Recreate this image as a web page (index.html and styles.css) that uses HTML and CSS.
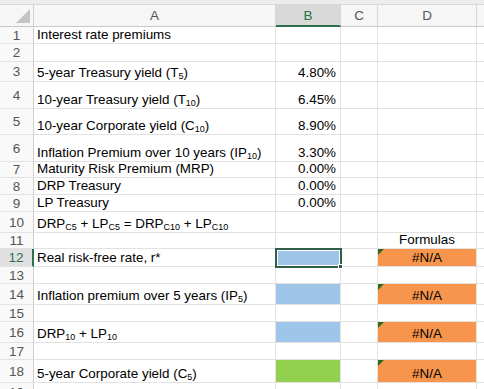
FILE: index.html
```html
<!DOCTYPE html>
<html>
<head>
<meta charset="utf-8">
<link rel="stylesheet" href="styles.css">
</head>
<body>
<div class="topstrip"></div>
<div class="sheet">
  <div class="corner"><span class="tri"></span></div>
  <div class="ch">A</div>
  <div class="ch sel">B</div>
  <div class="ch">C</div>
  <div class="ch">D</div>
  <div class="ch last"></div>

  <div class="rh">1</div><div class="c a"><span>Interest rate premiums</span></div><div class="c"></div><div class="c"></div><div class="c"></div><div class="c last"></div>
  <div class="rh">2</div><div class="c a"></div><div class="c"></div><div class="c"></div><div class="c"></div><div class="c last"></div>
  <div class="rh">3</div><div class="c a"><span>5-year Treasury yield (T<sub>5</sub>)</span></div><div class="c n"><span>4.80%</span></div><div class="c"></div><div class="c"></div><div class="c last"></div>
  <div class="rh">4</div><div class="c a"><span>10-year Treasury yield (T<sub>10</sub>)</span></div><div class="c n"><span>6.45%</span></div><div class="c"></div><div class="c"></div><div class="c last"></div>
  <div class="rh">5</div><div class="c a"><span>10-year Corporate yield (C<sub>10</sub>)</span></div><div class="c n"><span>8.90%</span></div><div class="c"></div><div class="c"></div><div class="c last"></div>
  <div class="rh">6</div><div class="c a"><span>Inflation Premium over 10 years (IP<sub>10</sub>)</span></div><div class="c n"><span>3.30%</span></div><div class="c"></div><div class="c"></div><div class="c last"></div>
  <div class="rh">7</div><div class="c a"><span>Maturity Risk Premium (MRP)</span></div><div class="c n"><span>0.00%</span></div><div class="c"></div><div class="c"></div><div class="c last"></div>
  <div class="rh">8</div><div class="c a"><span>DRP Treasury</span></div><div class="c n"><span>0.00%</span></div><div class="c"></div><div class="c"></div><div class="c last"></div>
  <div class="rh">9</div><div class="c a"><span>LP Treasury</span></div><div class="c n"><span>0.00%</span></div><div class="c"></div><div class="c"></div><div class="c last"></div>
  <div class="rh">10</div><div class="c a"><span>DRP<sub>C5</sub> + LP<sub>C5</sub> = DRP<sub>C10</sub> + LP<sub>C10</sub></span></div><div class="c"></div><div class="c"></div><div class="c"></div><div class="c last"></div>
  <div class="rh">11</div><div class="c a"></div><div class="c"></div><div class="c"></div><div class="c ctr"><span>Formulas</span></div><div class="c last"></div>
  <div class="rh rsel">12</div><div class="c a"><span>Real risk-free rate, r*</span></div><div class="c fill-blue active"><span class="handle"></span></div><div class="c"></div><div class="c ctr fill-orange"><span class="err"></span><span>#N/A</span></div><div class="c last"></div>
  <div class="rh">13</div><div class="c a"></div><div class="c"></div><div class="c"></div><div class="c"></div><div class="c last"></div>
  <div class="rh">14</div><div class="c a"><span>Inflation premium over 5 years (IP<sub>5</sub>)</span></div><div class="c fill-blue"></div><div class="c"></div><div class="c ctr fill-orange"><span class="err"></span><span>#N/A</span></div><div class="c last"></div>
  <div class="rh">15</div><div class="c a"></div><div class="c"></div><div class="c"></div><div class="c"></div><div class="c last"></div>
  <div class="rh">16</div><div class="c a"><span>DRP<sub>10</sub> + LP<sub>10</sub></span></div><div class="c fill-blue"></div><div class="c"></div><div class="c ctr fill-orange"><span class="err"></span><span>#N/A</span></div><div class="c last"></div>
  <div class="rh">17</div><div class="c a"></div><div class="c"></div><div class="c"></div><div class="c"></div><div class="c last"></div>
  <div class="rh">18</div><div class="c a"><span>5-year Corporate yield (C<sub>5</sub>)</span></div><div class="c fill-green"></div><div class="c"></div><div class="c ctr fill-orange"><span class="err"></span><span>#N/A</span></div><div class="c last"></div>
  <div class="rh">19</div><div class="c a"></div><div class="c"></div><div class="c"></div><div class="c"></div><div class="c last"></div>
</div>
</body>
</html>
```

FILE: styles.css
```css
* { box-sizing: border-box; }
html, body {
  margin: 0;
  padding: 0;
  background: #ffffff;
  overflow: hidden;
}
body {
  width: 484px;
  height: 389px;
  font-family: "Liberation Sans", Arial, sans-serif;
  color: #000;
}
.topstrip {
  height: 5px;
  background: #ececec;
  border-bottom: 1px solid #d8d8d8;
}
.sheet {
  display: grid;
  grid-template-columns: 34px 242px 65px 37px 99px 7px;
  grid-template-rows: 22px 17px 18px 20px 27px 26px 27px 16px 17px 17px 21px 16px 18px 17px 21px 17px 21px 17px 23px 20px;
}
.corner {
  position: relative;
  background: #f6f6f6;
  border-right: 1px solid #d0d0d0;
  border-bottom: 1px solid #c8c8c8;
}
.tri {
  position: absolute;
  right: 3px;
  bottom: 3px;
  width: 0;
  height: 0;
  border-left: 14px solid transparent;
  border-bottom: 14px solid #c4c4c4;
}
.ch {
  background: #f6f6f6;
  border-right: 1px solid #d6d6d6;
  border-bottom: 1px solid #c8c8c8;
  color: #555;
  font-size: 13.5px;
  display: flex;
  align-items: center;
  justify-content: center;
}
.ch.sel {
  background: #d9d9d9;
  color: #217346;
  border-bottom: 2px solid #2f6f4f;
}
.ch.last, .c.last { border-right: none; }
.rh {
  background: #f9f9f9;
  border-right: 1px solid #d0d0d0;
  border-bottom: 1px solid #e2e2e2;
  color: #555;
  font-size: 13.5px;
  display: flex;
  align-items: center;
  justify-content: center;
}
.rh.rsel {
  background: #e0e0e0;
  color: #2f6f4f;
  border-right: 2px solid #2f6f4f;
}
.c {
  position: relative;
  border-right: 1px solid #e2e2e2;
  border-bottom: 1px solid #e2e2e2;
  font-size: 13.4px;
  line-height: 15px;
  display: flex;
  align-items: flex-end;
  padding: 0 4px 1px 4px;
  white-space: nowrap;
}
.c.a { padding-left: 3px; }
.c.n { justify-content: flex-end; padding-right: 4px; }
.c.ctr { justify-content: center; }
sub {
  font-size: 9px;
  line-height: 0;
  vertical-align: -2px;
}
.fill-blue { background: #9fc5e8; background-clip: padding-box; }
.fill-green { background: #92d050; background-clip: padding-box; }
.fill-orange { background: #f6954b; background-clip: padding-box; }
.active {
  background: #9fc5e8;
  border: 2px solid #2f5f4a;
  margin: -1px;
  box-shadow: inset 0 0 0 1px #ffffff;
  z-index: 2;
}
.handle {
  position: absolute;
  right: -3px;
  bottom: -3px;
  width: 5px;
  height: 5px;
  background: #2f5f4a;
  border: 1px solid #fff;
}
.err {
  position: absolute;
  left: 0;
  top: 0;
  width: 0;
  height: 0;
  border-top: 6px solid #2d6a1f;
  border-right: 6px solid transparent;
}
```
